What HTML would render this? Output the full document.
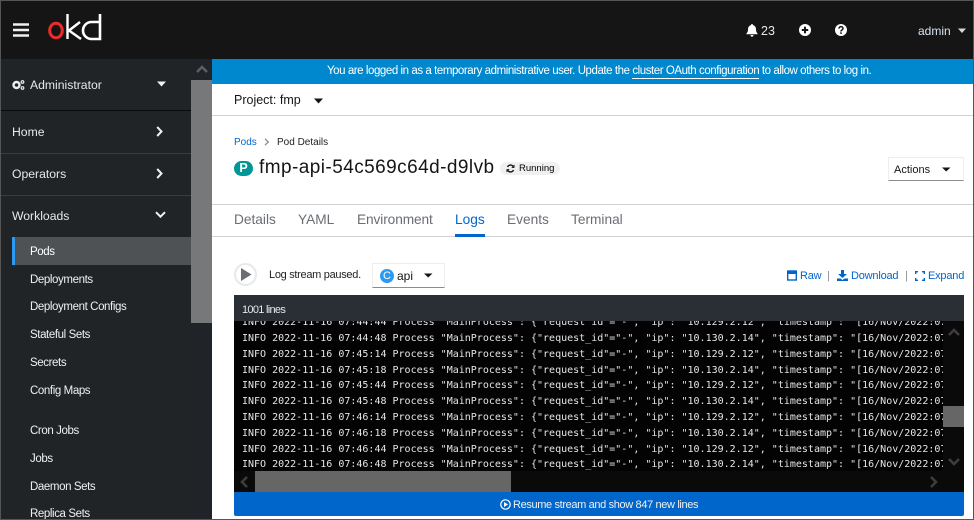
<!DOCTYPE html>
<html><head><meta charset="utf-8"><style>
html,body{margin:0;padding:0;background:#fff}
#p{position:relative;width:974px;height:520px;overflow:hidden;background:#fff;font-family:"Liberation Sans",sans-serif;color:#151515}
#p div,#p span.a,#p svg{position:absolute}
.t{white-space:nowrap;line-height:16px}
.n{color:#f0f0f0;font-size:11.5px;letter-spacing:-.4px}
.m{color:#e8e8e8;font-size:12.2px}
.l{left:242px;color:#e6e6e6;font:10px/14px "DejaVu Sans Mono",monospace;white-space:pre;width:701px;overflow:hidden;height:14px}
.tab{font-size:13.7px;color:#6a6e73;top:212px}
.b{color:#06c;font-size:11px;letter-spacing:-.2px;top:268px}
</style></head><body><div id="p">
<div style="left:0;top:0;width:974px;height:59px;background:#151515"></div>
<svg style="left:13px;top:23px" width="17" height="14"><path d="M0 1.5H16M0 7H16M0 12.5H16" stroke="#f0f0f0" stroke-width="2.6"/></svg>
<svg style="left:46px;top:12px" width="58" height="30" viewBox="0 0 58 30"><ellipse cx="10" cy="18.500" rx="6.300" ry="7.300" fill="none" stroke="#ee2b2b" stroke-width="3"/><path d="M21.500 2V27M23 18.500L34 10M23 18.500L35 27" stroke="#fff" stroke-width="2.400" fill="none"/><path d="M54 2V27H45.500A8.500 8.500 0 1 1 45.500 10H54" stroke="#fff" stroke-width="2.600" fill="none"/></svg>
<svg style="left:746px;top:24px" width="12" height="13" viewBox="0 0 12 13"><path d="M6 0C6.800 0 7 .6 7 1.100C9 1.600 10 3.200 10 5.500C10 8 11 8.600 11.500 9.500V10.300H.5V9.500C1 8.600 2 8 2 5.500C2 3.200 3 1.600 5 1.100C5 .6 5.200 0 6 0ZM4.500 11H7.500C7.500 12 6.800 12.700 6 12.700S4.500 12 4.500 11Z" fill="#fff"/></svg>
<div class="t" style="left:761px;top:23px;color:#e8e8e8;font-size:12.5px">23</div>
<svg style="left:799px;top:24px" width="12" height="12"><circle cx="6" cy="6" r="6" fill="#fff"/><path d="M6 2.800V9.200M2.800 6H9.200" stroke="#151515" stroke-width="2"/></svg>
<svg style="left:835px;top:24px" width="12" height="12"><circle cx="6" cy="6" r="6" fill="#fff"/><path d="M4 4.600C4 2 8 2 8 4.500C8 6 6 5.800 6 7.500" stroke="#151515" stroke-width="1.500" fill="none"/><rect x="5.200" y="8.300" width="1.600" height="1.600" fill="#151515"/></svg>
<div class="t" style="left:918px;top:23px;color:#d8e4f0;font-size:12px">admin</div>
<svg style="left:958px;top:28px" width="9" height="6"><path d="M0 .5H8L4 5Z" fill="#d8d8d8"/></svg>

<div style="left:0;top:59px;width:191px;height:461px;background:#212427"></div>
<div style="left:191px;top:59px;width:21px;height:461px;background:#202327"></div>
<div style="left:191px;top:80px;width:21px;height:243px;background:#77787a"></div>
<svg style="left:196px;top:65px" width="12" height="9"><path d="M1 7L6 2L11 7" stroke="#5b5e62" stroke-width="2.600" fill="none"/></svg>
<div style="left:0;top:110px;width:191px;height:1px;background:#0b0b0b"></div>
<div style="left:0;top:153px;width:191px;height:1px;background:#3a3d40"></div>
<div style="left:0;top:195px;width:191px;height:1px;background:#3a3d40"></div>
<svg style="left:12px;top:80px" width="13" height="10" viewBox="0 0 13 10"><circle cx="4.500" cy="5" r="3" fill="none" stroke="#eee" stroke-width="2.400"/><circle cx="10.500" cy="2" r="1.300" fill="none" stroke="#eee" stroke-width="1.200"/><circle cx="10.500" cy="8" r="1.300" fill="none" stroke="#eee" stroke-width="1.200"/></svg>
<div class="t m" style="left:30px;top:77px">Administrator</div>
<svg style="left:157px;top:81px" width="9" height="6"><path d="M0 .5H9L4.500 5.500Z" fill="#f0f0f0"/></svg>
<div class="t m" style="left:12px;top:124px">Home</div>
<svg style="left:156px;top:126px" width="7" height="11"><path d="M1.200 1L5.500 5.500L1.200 10" stroke="#f0f0f0" stroke-width="2" fill="none"/></svg>
<div class="t m" style="left:12px;top:166px">Operators</div>
<svg style="left:156px;top:168px" width="7" height="11"><path d="M1.200 1L5.500 5.500L1.200 10" stroke="#f0f0f0" stroke-width="2" fill="none"/></svg>
<div class="t m" style="left:12px;top:208px">Workloads</div>
<svg style="left:155px;top:211px" width="11" height="8"><path d="M1 1.200L5.500 5.700L10 1.200" stroke="#f0f0f0" stroke-width="2" fill="none"/></svg>
<div style="left:12px;top:237px;width:179px;height:28px;background:#4f5255"></div>
<div style="left:12px;top:237px;width:3px;height:28px;background:#2b9af3"></div>
<div class="t n" style="left:30px;top:244px;color:#fff">Pods</div>
<div class="t n" style="left:30px;top:272px">Deployments</div>
<div class="t n" style="left:30px;top:299px">Deployment Configs</div>
<div class="t n" style="left:30px;top:327px">Stateful Sets</div>
<div class="t n" style="left:30px;top:355px">Secrets</div>
<div class="t n" style="left:30px;top:383px">Config Maps</div>
<div class="t n" style="left:30px;top:423px">Cron Jobs</div>
<div class="t n" style="left:30px;top:451px">Jobs</div>
<div class="t n" style="left:30px;top:479px">Daemon Sets</div>
<div class="t n" style="left:30px;top:506px">Replica Sets</div>

<div style="left:212px;top:59px;width:762px;height:25px;background:#0088ce"></div>
<div class="t" style="left:327px;top:63px;color:#fff;font-size:11.500px;letter-spacing:-.44px">You are logged in as a temporary administrative user. Update the <span style="border-bottom:1px solid #fff;padding-bottom:1px">cluster OAuth configuration</span> to allow others to log in.</div>
<div class="t" style="left:234px;top:92px;font-size:12.500px">Project: fmp</div>
<svg style="left:314px;top:98px" width="9" height="6"><path d="M0 .5H9L4.500 5.500Z" fill="#151515"/></svg>
<div style="left:212px;top:115px;width:762px;height:1px;background:#d2d2d2"></div>

<div class="t" style="left:234px;top:135px;font-size:10px;color:#06c">Pods</div>
<svg style="left:264px;top:138px" width="6" height="8"><path d="M1 .8L4.300 4L1 7.200" stroke="#8a8d90" stroke-width="1.300" fill="none"/></svg>
<div class="t" style="left:277px;top:135px;font-size:10px;color:#222">Pod Details</div>
<div style="left:234px;top:161px;width:19px;height:15px;border-radius:8px;background:#009596"></div>
<div class="t" style="left:234px;top:160px;width:19px;text-align:center;color:#fff;font-size:12.500px;font-weight:bold">P</div>
<div class="t" style="left:259px;top:158px;font-size:19px;letter-spacing:.44px;color:#151515;line-height:20px">fmp-api-54c569c64d-d9lvb</div>
<div style="left:500px;top:162px;width:60px;height:13px;border-radius:7px;background:#f0f0f0"></div>
<svg style="left:506px;top:164px" width="9" height="9" viewBox="0 0 9 9"><path d="M7.600 3.200A3.300 3.300 0 0 0 1.500 3M1.400 5.800A3.300 3.300 0 0 0 7.500 6" stroke="#151515" stroke-width="1.400" fill="none"/><path d="M8.500 .5V3.900H5.300ZM.5 8.500V5.100H3.700Z" fill="#151515"/></svg>
<div class="t" style="left:519px;top:161px;font-size:9.500px;color:#000">Running</div>
<div style="left:888px;top:157px;width:74px;height:22px;border:1px solid #ededed;border-bottom:1px solid #8a8d90"></div>
<div class="t" style="left:894px;top:162px;font-size:11px;color:#151515">Actions</div>
<svg style="left:942px;top:167px" width="9" height="5"><path d="M0 .5H8.500L4.200 4.500Z" fill="#151515"/></svg>

<div style="left:212px;top:204px;width:762px;height:1px;background:#d2d2d2"></div>
<div style="left:212px;top:236px;width:762px;height:1px;background:#d2d2d2"></div>
<div class="t tab" style="left:234px">Details</div>
<div class="t tab" style="left:298px">YAML</div>
<div class="t tab" style="left:357px;letter-spacing:-.1px">Environment</div>
<div class="t tab" style="left:455px;color:#06c">Logs</div>
<div style="left:455px;top:234px;width:30px;height:3px;background:#06c"></div>
<div class="t tab" style="left:507px">Events</div>
<div class="t tab" style="left:571px">Terminal</div>

<div style="left:234px;top:263px;width:19px;height:19px;border:2px solid #e8e8e8;border-radius:50%"></div>
<svg style="left:241px;top:268px" width="11" height="13"><path d="M0 0L10.500 6.500L0 13Z" fill="#6a6e73"/></svg>
<div class="t" style="left:269px;top:267px;font-size:11px;color:#222;letter-spacing:-.3px">Log stream paused.</div>
<div style="left:372px;top:263px;width:71px;height:23px;border:1px solid #ededed;border-bottom:1px solid #8a8d90"></div>
<div style="left:380px;top:269px;width:14px;height:14px;border-radius:50%;background:#2b9af3"></div>
<div class="t" style="left:380px;top:268px;width:14px;text-align:center;color:#fff;font-size:11px">C</div>
<div class="t" style="left:397px;top:268px;font-size:12px;color:#151515">api</div>
<svg style="left:424px;top:273px" width="9" height="5"><path d="M0 .5H8.500L4.200 4.500Z" fill="#151515"/></svg>

<svg style="left:787px;top:270px" width="10" height="11"><rect x=".7" y="1" width="8.600" height="9" fill="none" stroke="#06c" stroke-width="1.400"/><rect x="0" y="1" width="10" height="3" fill="#06c"/></svg>
<div class="t b" style="left:800px">Raw</div>
<div class="t b" style="left:827px;color:#8a8d90;letter-spacing:0;top:268px">|</div>
<svg style="left:837px;top:270px" width="11" height="11"><path d="M4 0H7V4H10L5.500 8L1 4H4ZM0 8.500H3.500L5.500 10L7.500 8.500H11V11H0Z" fill="#06c"/></svg>
<div class="t b" style="left:851px">Download</div>
<div class="t b" style="left:905px;color:#8a8d90;letter-spacing:0;top:268px">|</div>
<svg style="left:915px;top:271px" width="10" height="10"><path d="M.7 3V.7H3M7 .7H9.300V3M9.300 7V9.300H7M3 9.300H.7V7" stroke="#06c" stroke-width="1.400" fill="none"/></svg>
<div class="t b" style="left:928px">Expand</div>

<div style="left:234px;top:295px;width:730px;height:26px;background:#2a2f35"></div>
<div class="t" style="left:242px;top:302px;font-size:11px;color:#e8e8e8;letter-spacing:-.7px">1001 lines</div>
<div style="left:234px;top:321px;width:730px;height:171px;background:#030303;overflow:hidden"></div>
<div class="l" style="top:316px;height:11px;line-height:14px;clip-path:inset(5px 0 0 0)">INFO 2022-11-16 07:44:44 Process "MainProcess": {"request_id"="-", "ip": "10.129.2.12", "timestamp": "[16/Nov/2022:07</div>
<div class="l" style="top:332px">INFO 2022-11-16 07:44:48 Process "MainProcess": {"request_id"="-", "ip": "10.130.2.14", "timestamp": "[16/Nov/2022:07</div>
<div class="l" style="top:348px">INFO 2022-11-16 07:45:14 Process "MainProcess": {"request_id"="-", "ip": "10.129.2.12", "timestamp": "[16/Nov/2022:07</div>
<div class="l" style="top:364px">INFO 2022-11-16 07:45:18 Process "MainProcess": {"request_id"="-", "ip": "10.130.2.14", "timestamp": "[16/Nov/2022:07</div>
<div class="l" style="top:379px">INFO 2022-11-16 07:45:44 Process "MainProcess": {"request_id"="-", "ip": "10.129.2.12", "timestamp": "[16/Nov/2022:07</div>
<div class="l" style="top:395px">INFO 2022-11-16 07:45:48 Process "MainProcess": {"request_id"="-", "ip": "10.130.2.14", "timestamp": "[16/Nov/2022:07</div>
<div class="l" style="top:411px">INFO 2022-11-16 07:46:14 Process "MainProcess": {"request_id"="-", "ip": "10.129.2.12", "timestamp": "[16/Nov/2022:07</div>
<div class="l" style="top:427px">INFO 2022-11-16 07:46:18 Process "MainProcess": {"request_id"="-", "ip": "10.130.2.14", "timestamp": "[16/Nov/2022:07</div>
<div class="l" style="top:443px">INFO 2022-11-16 07:46:44 Process "MainProcess": {"request_id"="-", "ip": "10.129.2.12", "timestamp": "[16/Nov/2022:07</div>
<div class="l" style="top:458px">INFO 2022-11-16 07:46:48 Process "MainProcess": {"request_id"="-", "ip": "10.130.2.14", "timestamp": "[16/Nov/2022:07</div>
<div style="left:943px;top:321px;width:21px;height:171px;background:#0a0a0b"></div>
<div style="left:943px;top:406px;width:21px;height:21px;background:#666"></div>
<svg style="left:948px;top:328px" width="12" height="9"><path d="M1 7L6 2L11 7" stroke="#3d3d3d" stroke-width="2.600" fill="none"/></svg>
<svg style="left:948px;top:457px" width="12" height="9"><path d="M1 2L6 7L11 2" stroke="#3d3d3d" stroke-width="2.600" fill="none"/></svg>
<div style="left:234px;top:471px;width:709px;height:21px;background:#0a0a0b"></div>
<div style="left:255px;top:471px;width:256px;height:21px;background:#666"></div>
<svg style="left:240px;top:476px" width="9" height="12"><path d="M7 1L2 6L7 11" stroke="#3d3d3d" stroke-width="2.600" fill="none"/></svg>
<svg style="left:929px;top:476px" width="9" height="12"><path d="M2 1L7 6L2 11" stroke="#3d3d3d" stroke-width="2.600" fill="none"/></svg>
<div style="left:234px;top:492px;width:730px;height:24px;background:#06c;border-radius:0 0 2px 2px"></div>
<svg style="left:500px;top:499px" width="11" height="11"><circle cx="5.500" cy="5.500" r="4.700" fill="none" stroke="#fff" stroke-width="1.200"/><path d="M4 3L8 5.500L4 8Z" fill="#fff"/></svg>
<div class="t" style="left:513px;top:497px;color:#f0f0f0;font-size:11px;letter-spacing:-.36px">Resume stream and show 847 new lines</div>

<div style="left:0;top:0;width:974px;height:1px;background:#555"></div>
<div style="left:0;top:0;width:1px;height:520px;background:#555"></div>
<div style="left:973px;top:0;width:1px;height:520px;background:#555"></div>
<div style="left:0;top:519px;width:974px;height:1px;background:#555"></div>
</div></body></html>
